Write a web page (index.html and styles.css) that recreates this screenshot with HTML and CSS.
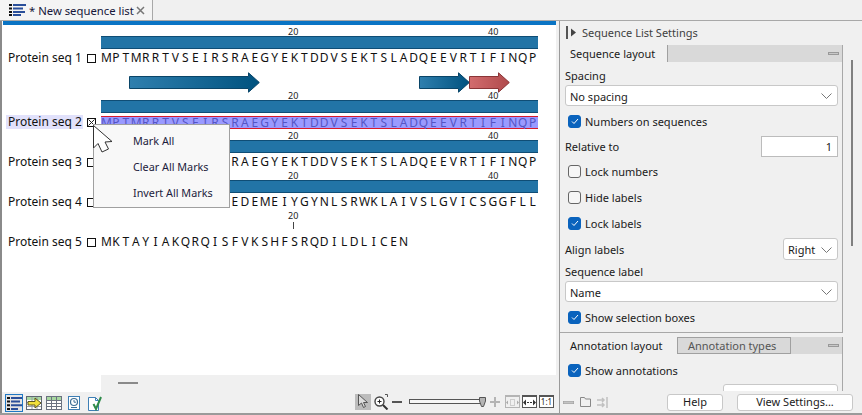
FILE: index.html
```html
<!DOCTYPE html>
<html lang="en">
<head>
<meta charset="utf-8">
<title>New sequence list</title>
<link rel="stylesheet" href="styles.css">
</head>
<body>
<div class="app">
  <div class="tabbar">
    <div class="doc-tab">
      <svg class="tab-icon" width="17" height="12" viewBox="0 0 17 12"><path d="M0 0h3v2H0zM0 3.500h3v2H0zM0 7h3v2H0zM0 10h3v2H0z" fill="#111"/><path d="M4 0h13v2H4zM4 3.500h10v2H4zM4 7h12v2H4zM4 10h8v2H4z" fill="#2a4f9a"/></svg>
      <span class="doc-title">* New sequence list</span>
      <svg class="tab-close" width="9" height="9" viewBox="0 0 9 9"><path d="M1 1l7 7M8 1L1 8" stroke="#777" stroke-width="1.500" fill="none"/></svg>
    </div>
  </div>
  <div class="main">
    <section class="editor">
      <div class="accent"></div>
      <div class="canvas">
        <div class="ruler"><span>20</span><span>40</span></div>
        <div class="bar"></div>
        <div class="seq-row">
          <span class="name">Protein seq 1</span><span class="box"></span>
          <div class="letters"><i>M</i><i>P</i><i>T</i><i>M</i><i>R</i><i>R</i><i>T</i><i>V</i><i>S</i><i>E</i><i>I</i><i>R</i><i>S</i><i>R</i><i>A</i><i>E</i><i>G</i><i>Y</i><i>E</i><i>K</i><i>T</i><i>D</i><i>D</i><i>V</i><i>S</i><i>E</i><i>K</i><i>T</i><i>S</i><i>L</i><i>A</i><i>D</i><i>Q</i><i>E</i><i>E</i><i>V</i><i>R</i><i>T</i><i>I</i><i>F</i><i>I</i><i>N</i><i>Q</i><i>P</i></div>
        </div>
        <div class="arrows">
          <svg class="arrow-a" width="131" height="21" viewBox="0 0 131 21"><defs><linearGradient id="blue"><stop offset="0" stop-color="#2f7fae"/><stop offset="1" stop-color="#00527f"/></linearGradient><linearGradient id="red"><stop offset="0" stop-color="#d26c6e"/><stop offset="1" stop-color="#b04a4c"/></linearGradient></defs><path d="M.5 4.500h119V.8L130.300 10.500 119.500 20.200v-3.700H.5z" fill="url(#blue)" stroke="#0a4568"/></svg>
          <svg class="arrow-b" width="51" height="21" viewBox="0 0 51 21"><path d="M.5 4.500h39V.8L50.300 10.500 39.500 20.200v-3.700H.5z" fill="url(#blue)" stroke="#0a4568"/></svg>
          <svg class="arrow-c" width="41" height="21" viewBox="0 0 41 21"><path d="M.5 4.500h29V.8L40.300 10.500 29.500 20.200v-3.700H.5z" fill="url(#red)" stroke="#8a3537"/></svg>
        </div>

        <div class="ruler"><span>20</span><span>40</span></div>
        <div class="bar"></div>
        <div class="seq-row selected">
          <span class="name">Protein seq 2</span><span class="box marked"><svg width="7" height="7" viewBox="0 0 7 7"><path d="M.5.5l6 6M6.500.5l-6 6" stroke="#222" fill="none"/></svg></span>
          <div class="letters"><i>M</i><i>P</i><i>T</i><i>M</i><i>R</i><i>R</i><i>T</i><i>V</i><i>S</i><i>E</i><i>I</i><i>R</i><i>S</i><i>R</i><i>A</i><i>E</i><i>G</i><i>Y</i><i>E</i><i>K</i><i>T</i><i>D</i><i>D</i><i>V</i><i>S</i><i>E</i><i>K</i><i>T</i><i>S</i><i>L</i><i>A</i><i>D</i><i>Q</i><i>E</i><i>E</i><i>V</i><i>R</i><i>T</i><i>I</i><i>F</i><i>I</i><i>N</i><i>Q</i><i>P</i></div>
        </div>

        <div class="ruler"><span>20</span><span>40</span></div>
        <div class="bar"></div>
        <div class="seq-row">
          <span class="name">Protein seq 3</span><span class="box"></span>
          <div class="letters"><i>M</i><i>P</i><i>T</i><i>M</i><i>R</i><i>R</i><i>T</i><i>V</i><i>S</i><i>E</i><i>I</i><i>R</i><i>S</i><i>R</i><i>A</i><i>E</i><i>G</i><i>Y</i><i>E</i><i>K</i><i>T</i><i>D</i><i>D</i><i>V</i><i>S</i><i>E</i><i>K</i><i>T</i><i>S</i><i>L</i><i>A</i><i>D</i><i>Q</i><i>E</i><i>E</i><i>V</i><i>R</i><i>T</i><i>I</i><i>F</i><i>I</i><i>N</i><i>Q</i><i>P</i></div>
        </div>

        <div class="ruler"><span>20</span><span>40</span></div>
        <div class="bar"></div>
        <div class="seq-row">
          <span class="name">Protein seq 4</span><span class="box"></span>
          <div class="letters"><i>M</i><i>S</i><i>K</i><i>L</i><i>V</i><i>T</i><i>A</i><i>G</i><i>R</i><i>L</i><i>P</i><i>Q</i><i>T</i><i>E</i><i>D</i><i>E</i><i>M</i><i>E</i><i>I</i><i>Y</i><i>G</i><i>Y</i><i>N</i><i>L</i><i>S</i><i>R</i><i>W</i><i>K</i><i>L</i><i>A</i><i>I</i><i>V</i><i>S</i><i>L</i><i>G</i><i>V</i><i>I</i><i>C</i><i>S</i><i>G</i><i>G</i><i>F</i><i>L</i><i>L</i></div>
        </div>

        <div class="ruler"><span>20</span></div>
        <div class="tick-track"><span class="tick"></span></div>
        <div class="seq-row">
          <span class="name">Protein seq 5</span><span class="box"></span>
          <div class="letters"><i>M</i><i>K</i><i>T</i><i>A</i><i>Y</i><i>I</i><i>A</i><i>K</i><i>Q</i><i>R</i><i>Q</i><i>I</i><i>S</i><i>F</i><i>V</i><i>K</i><i>S</i><i>H</i><i>F</i><i>S</i><i>R</i><i>Q</i><i>D</i><i>I</i><i>L</i><i>D</i><i>L</i><i>I</i><i>C</i><i>E</i><i>N</i></div>
        </div>

        <div class="menu">
          <div class="menu-item">Mark All</div>
          <div class="menu-item">Clear All Marks</div>
          <div class="menu-item">Invert All Marks</div>
        </div>
        <svg class="cursor" width="20" height="28" viewBox="0 0 20 28"><path d="M.5.5V23L5 18.500 9 27l6.500-3L12 17l7-.500z" fill="#fff" stroke="#333" stroke-linejoin="round"/></svg>
      </div>
      <div class="hscroll"><span class="thumb"></span></div>
      <div class="view-bar">
        <div class="views">
          <span class="view active"><svg width="15" height="13" viewBox="0 0 15 13"><path d="M0 0h3v2H0zM0 3.600h3v2H0zM0 7.300h3v2H0zM0 11h3v2H0z" fill="#111"/><path d="M4 0h11v2H4zM4 3.600h9v2H4zM4 7.300h11v2H4zM4 11h7v2H4z" fill="#2a4f9a"/></svg></span>
          <span class="view v2"><svg width="16" height="14" viewBox="0 0 16 14"><rect x=".5" y=".5" width="15" height="13" fill="#fff" stroke="#5f6672"/><rect x="1" y="1" width="14" height="3" fill="#a8d8a0"/><path d="M1 6.500h14M1 10.500h14M6 1v12M11 1v12" stroke="#9a9fa8"/><path d="M2 5.500h7V2l6 5-6 5V9H2z" fill="#f2e03c" stroke="#5d5520"/></svg></span>
          <span class="view v3"><svg width="16" height="14" viewBox="0 0 16 14"><rect x=".5" y=".5" width="15" height="13" fill="#fff" stroke="#6b7280"/><rect x="1" y="1" width="14" height="3" fill="#a8d8a0"/><path d="M1 4.500h14M1 7.500h14M1 10.500h14M5.500 1v12M10.500 1v12" stroke="#6b7280"/></svg></span>
          <span class="view v4"><svg width="12" height="14" viewBox="0 0 12 14"><rect x=".5" y=".5" width="11" height="13" fill="#fff" stroke="#3e7fb5"/><circle cx="6" cy="6" r="3.500" fill="none" stroke="#3e6f95" stroke-width="1.200"/><path d="M6 4v2.200h2M3 11.500h6" stroke="#3e6f95" fill="none"/></svg></span>
          <span class="view v5"><svg width="14" height="15" viewBox="0 0 14 15"><path d="M.5 1.500h7l3 3v10h-10z" fill="#fff" stroke="#3e7fb5"/><path d="M7.500 1.500v3h3" fill="none" stroke="#3e7fb5"/><path d="M5.500 8l2.500 5L13 1" stroke="#2e8b4a" stroke-width="2" fill="none"/></svg></span>
        </div>
        <div class="zoom-tools">
          <span class="tool picked"><svg width="12" height="15" viewBox="0 0 12 15"><path d="M1.500.5v11l3-2.500 2 4.500 2-1-2-4h4z" fill="#ddd" stroke="#555"/></svg></span>
          <span class="tool"><svg width="15" height="16" viewBox="0 0 15 16"><circle cx="5.500" cy="7.500" r="4.500" fill="#fff" stroke="#444" stroke-width="1.400"/><path d="M3.500 7.500h4M5.500 5.500v4" stroke="#222"/><path d="M9 11l4.500 4.500" stroke="#333" stroke-width="2"/><path d="M11 .5h2.500V3" stroke="#555" fill="none"/></svg></span>
          <span class="minus"></span>
          <span class="slider"><svg class="slider-thumb" width="7" height="10" viewBox="0 0 7 10"><path d="M.5.5h6v3.500L4.500 9.500h-2L.5 4z" fill="#b4b4b4" stroke="#555"/></svg></span>
          <svg class="plus" width="10" height="10" viewBox="0 0 10 10"><path d="M0 5h10M5 0v10" stroke="#b4b4b4" stroke-width="2"/></svg>
          <span class="fit dim"><svg width="13" height="9" viewBox="0 0 13 9"><path d="M0 4.500l2-2v4zM13 4.500l-2-2v4z" fill="#aaa"/><path d="M4.500 1.500h4v6h-4z" fill="none" stroke="#aaa" stroke-dasharray="1 1"/></svg></span>
          <span class="fit"><svg width="13" height="9" viewBox="0 0 13 9"><path d="M0 4.500l3-3v6zM13 4.500l-3-3v6z" fill="#333"/><path d="M4 4.500h5" stroke="#333" stroke-dasharray="2 1"/></svg></span>
          <span class="fit ratio">1:1</span>
        </div>
      </div>
    </section>

    <aside class="panel">
      <div class="panel-head">
        <svg width="10" height="13" viewBox="0 0 10 13"><path d="M0 0h2v13H0z" fill="#555"/><path d="M5 2.500l5 4-5 4z" fill="#444"/></svg>
        <span>Sequence List Settings</span>
      </div>
      <div class="panel-body">
        <div class="settings">
          <div class="group">
            <div class="tabs"><span class="tab on">Sequence layout</span><span class="collapse"></span></div>
            <div class="fields first-fields">
              <div class="lbl spacing-lbl">Spacing</div>
              <div class="select"><span>No spacing</span><svg class="chev" width="11" height="6" viewBox="0 0 11 6"><path d="M.5.5l5 5 5-5" stroke="#777" fill="none"/></svg></div>
              <label class="check h-rel"><span class="cb on"><svg width="8" height="7" viewBox="0 0 8 7"><path d="M1 3.500l2 2 4-4.500" stroke="#fff" fill="none"/></svg></span>Numbers on sequences</label>
              <div class="line rel-line"><span class="lbl">Relative to</span><span class="num">1</span></div>
              <label class="check"><span class="cb"></span>Lock numbers</label>
              <label class="check"><span class="cb"></span>Hide labels</label>
              <label class="check"><span class="cb on"><svg width="8" height="7" viewBox="0 0 8 7"><path d="M1 3.500l2 2 4-4.500" stroke="#fff" fill="none"/></svg></span>Lock labels</label>
              <div class="line align-line"><span class="lbl">Align labels</span><div class="select small"><span>Right</span><svg class="chev" width="11" height="6" viewBox="0 0 11 6"><path d="M.5.5l5 5 5-5" stroke="#777" fill="none"/></svg></div></div>
              <div class="lbl seq-lbl">Sequence label</div>
              <div class="select"><span>Name</span><svg class="chev" width="11" height="6" viewBox="0 0 11 6"><path d="M.5.5l5 5 5-5" stroke="#777" fill="none"/></svg></div>
              <label class="check tight"><span class="cb on"><svg width="8" height="7" viewBox="0 0 8 7"><path d="M1 3.500l2 2 4-4.500" stroke="#fff" fill="none"/></svg></span>Show selection boxes</label>
            </div>
          </div>
          <div class="group second">
            <div class="tabs"><span class="tab on">Annotation layout</span><span class="tab off">Annotation types</span><span class="collapse"></span></div>
            <div class="fields">
              <label class="check show-ann"><span class="cb on"><svg width="8" height="7" viewBox="0 0 8 7"><path d="M1 3.500l2 2 4-4.500" stroke="#fff" fill="none"/></svg></span>Show annotations</label>
              <div class="line pos-line"><span class="lbl">Position</span><div class="select mid"><span>Next to</span></div></div>
            </div>
          </div>
        </div>
        <div class="vscroll"><span class="vthumb"></span></div>
      </div>
      <div class="panel-foot">
        <div class="foot-icons">
          <svg width="11" height="3" viewBox="0 0 11 3"><rect width="11" height="3" fill="#c4c4c4" stroke="#888" stroke-width=".6"/></svg>
          <svg width="11" height="10" viewBox="0 0 11 10"><path d="M.5 9.500v-9h4l1 1.500h5v7.500z" fill="none" stroke="#888"/></svg>
          <svg width="11" height="11" viewBox="0 0 11 11"><path d="M0 3h7M0 8h7M5 1l2 2-2 2M5 6l2 2-2 2M10 0v11" stroke="#c0c0c0" fill="none" stroke-width="1.500"/></svg>
        </div>
        <button class="btn help">Help</button>
        <button class="btn view-settings">View Settings...</button>
      </div>
    </aside>
  </div>
</div>
</body>
</html>
```
FILE: styles.css
```css
* { box-sizing: border-box; }
html, body { margin: 0; padding: 0; }
body { width: 862px; height: 415px; overflow: hidden; font-family: "Noto Sans", "Open Sans", sans-serif; font-size: 11px; color: #1a1a1a; background: #f0f0f0; }
.app { width: 862px; height: 415px; display: flex; flex-direction: column; }

.tabbar { height: 21px; flex: none; display: flex; align-items: flex-end; background: #f0f0f0; border-bottom: 1px solid #a8a8a8; }
.doc-tab { width: 153px; height: 21px; display: flex; align-items: center; padding-left: 9px; background: #f4f4f4; border: 1px solid #a8a8a8; border-left: none; border-bottom: none; }
.tab-icon { margin-right: 3px; flex: none; }
.doc-title { width: 106px; font-size: 11.300px; white-space: nowrap; color: #16163a; }
.tab-close { flex: none; margin-left: 1px; }

.main { flex: 1; min-height: 0; display: flex; border-bottom: 2px solid #9a9a9a; }

.editor { width: 556px; flex: none; display: flex; flex-direction: column; border-left: 2px solid #8a8a8a; background: #fff; }
.accent { height: 4px; flex: none; background: #0a74c4; margin-left: 1px; }
.canvas { position: relative; flex: 1; min-height: 0; padding-top: 2px; overflow: hidden; }

.ruler { height: 9px; display: flex; margin-left: 286px; gap: 190px; font-size: 9px; line-height: 9px; color: #222; }
.ruler span { width: 10px; text-align: center; }
.bar { height: 13px; width: 437px; margin-left: 99px; background: #2274a6; border-top: 1px solid #0f4d75; border-bottom: 1px solid #0f4d75; }
.tick-track { height: 13px; padding: 2px 0 0 291px; }
.tick { display: block; width: 1px; height: 7px; background: #444; }

.seq-row { height: 18px; display: flex; align-items: center; }
.name { width: 77px; height: 14px; margin-left: 4px; padding-left: 2px; line-height: 14px; font-size: 12px; white-space: nowrap; color: #111; }
.box { width: 9px; height: 9px; margin-left: 4px; margin-right: 5px; flex: none; border: 1px solid #111; background: #fff; display: flex; align-items: center; justify-content: center; }
.box svg { display: block; }
.letters { display: flex; height: 14px; flex: none; font-size: 12px; line-height: 14px; color: #111; }
.letters i { width: 9.930px; flex: none; text-align: center; font-style: normal; }

.selected .name { background: #e1e1fb; }
.selected .letters { width: 437px; height: 13px; background: #9a9aff; color: #5555c4; border-top: 1px solid #d8182c; border-bottom: 1px solid #d8182c; line-height: 12px; }

.arrows { height: 24px; padding: 5px 0 0 127px; display: flex; align-items: flex-start; }
.arrows svg { display: block; flex: none; position: relative; z-index: 1; }
.arrow-b { margin-left: 159px; }
.arrow-c { margin-left: -1px; }

.menu { position: absolute; left: 91px; top: 99px; width: 137px; height: 84px; padding-top: 3px; background: #f8f8f8; border: 1px solid #a0a0a0; z-index: 3; }
.menu-item { height: 26px; padding-left: 39px; line-height: 26px; font-size: 10.800px; color: #1c1c3c; }
.cursor { position: absolute; left: 91px; top: 100px; z-index: 4; }

.hscroll { height: 17px; flex: none; margin-left: 99px; background: #f0f0f0; padding: 7px 0 0 17px; }
.thumb { display: block; width: 20px; height: 2px; background: #8a8a8a; }

.view-bar { height: 21px; flex: none; display: flex; justify-content: space-between; background: #f0f0f0; padding-right: 2px; }
.views { display: flex; align-items: center; padding: 1px 0 0 3px; }
.view { display: flex; align-items: center; justify-content: center; flex: none; }
.view.active { width: 18px; height: 18px; border: 1px solid #1f78c4; background: #e4e4e4; }
.v2 { margin-left: 3px; }
.v3 { margin-left: 4px; }
.v4 { margin-left: 6px; }
.v5 { margin-left: 8px; }

.zoom-tools { display: flex; align-items: center; padding-bottom: 2px; }
.tool { height: 16px; display: flex; align-items: center; justify-content: center; margin-right: 3px; width: 15px; }
.tool.picked { width: 16px; background: #bcbcbc; }
.minus { width: 10px; height: 2px; background: #555; margin-right: 7px; }
.slider { position: relative; width: 73px; height: 5px; border: 1px solid #555; background: #f6f6f6; margin-right: 8px; }
.slider-thumb { position: absolute; right: -5px; top: -3px; display: block; }
.plus { margin-right: 5px; flex: none; }
.fit { width: 15px; height: 13px; margin-right: 2px; display: flex; align-items: center; justify-content: center; background: #fff; border: 1px solid #555; border-top: 2px solid #555; }
.fit.dim { background: #f0f0f0; border-color: #b4b4b4; }
.fit.ratio { font-size: 8px; line-height: 10px; margin-right: 0; }

.panel { margin-left: 3px; flex: 1; min-width: 0; display: flex; flex-direction: column; border-left: 1px solid #9a9a9a; background: #f0f0f0; }
.panel-head { height: 24px; flex: none; display: flex; align-items: center; padding: 0 0 2px 6px; gap: 6px; color: #404040; }
.panel-body { flex: 1; min-height: 0; overflow: hidden; display: flex; }
.settings { width: 283px; flex: none; }
.group { border-bottom: 1px solid #a8a8a8; border-right: 1px solid #a8a8a8; }
.group.second { margin-top: 4px; border-bottom: none; }
.tabs { height: 17px; display: flex; align-items: stretch; background: #d9d9d9; position: relative; }
.tab { display: block; line-height: 18px; padding: 0 8px 0 10px; border-right: 1px solid #a0a0a0; white-space: nowrap; }
.tab.on { background: #f0f0f0; }
.group:first-child .tab.on { width: 108px; }
.group.second .tab.on { width: 118px; }
.tab.off { width: 113px; color: #555; border-bottom: 1px solid #a0a0a0; border-top: 1px solid #a0a0a0; line-height: 16px; }
.collapse { position: absolute; right: 3px; top: 7px; width: 11px; height: 3px; background: #c8c8c8; border: 1px solid #999; }
.fields { padding: 0 4px 0 5px; }
.first-fields { padding-top: 5px; padding-bottom: 2px; }
.lbl { display: block; color: #1a1a1a; }
.spacing-lbl { height: 18px; line-height: 18px; }
.seq-lbl { height: 18px; line-height: 18px; margin-top: 1px; }
.select { height: 21px; background: #fff; border: 1px solid #c8c8c8; border-radius: 3px; padding: 1px 5px 0 4px; display: flex; align-items: center; justify-content: space-between; }
.select.small { width: 55px; height: 22px; }
.select.mid { width: 115px; }
.check { height: 26px; display: flex; align-items: center; gap: 4px; padding-left: 3px; color: #1a1a1a; }
.check.h-rel { margin-top: 2px; }
.check.tight { margin-top: 2px; }
.check.show-ann { margin-top: 3px; }
.cb { width: 13px; height: 13px; border-radius: 3px; border: 1px solid #666; background: #f6f6f6; display: flex; align-items: center; justify-content: center; flex: none; }
.cb.on { background: #0a63bd; border-color: #0a63bd; }
.line { display: flex; justify-content: space-between; align-items: center; }
.rel-line { height: 24px; }
.num { width: 77px; height: 21px; line-height: 19px; padding-right: 5px; text-align: right; background: #fff; border: 1px solid #bcbcbc; }
.align-line { height: 26px; }
.pos-line { height: 22px; }
.vscroll { flex: 1; padding: 15px 0 0 8px; }
.vthumb { display: block; width: 2px; height: 186px; background: #808080; }

.panel-foot { height: 22px; flex: none; display: flex; align-items: center; padding: 0 8px 0 3px; background: #f0f0f0; }
.foot-icons { display: flex; align-items: center; gap: 6px; width: 104px; }
.btn { height: 17px; padding: 0; border: 1px solid #c8c8c8; border-radius: 3px; background: #fff; color: #1a1a1a; font: 11px/14px "Noto Sans", sans-serif; }
.help { width: 56px; }
.view-settings { width: 116px; margin-left: 14px; }
```
